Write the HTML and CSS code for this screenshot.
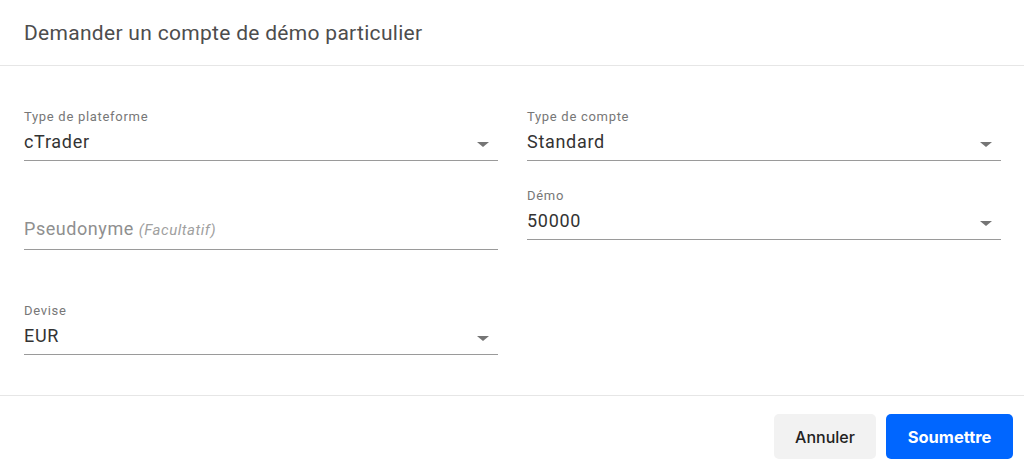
FILE: index.html
```html
<!DOCTYPE html>
<html lang="fr">
<head>
<meta charset="utf-8">
<title>Demander un compte de démo particulier</title>
<link rel="stylesheet" href="styles.css">
</head>
<body>
<div class="dialog">
  <header class="dialog-header">
    <h1 class="dialog-title">Demander un compte de démo particulier</h1>
  </header>
  <main class="dialog-body">
    <div class="column">
      <div class="field">
        <div class="field-label">Type de plateforme</div>
        <div class="select"><span class="value">cTrader</span><span class="arrow"></span></div>
      </div>
      <div class="field field-text gap-pseudo">
        <div class="field-label"></div>
        <div class="input"><span class="placeholder">Pseudonyme <em class="optional">(Facultatif)</em></span></div>
      </div>
      <div class="field gap-devise">
        <div class="field-label">Devise</div>
        <div class="select"><span class="value">EUR</span><span class="arrow"></span></div>
      </div>
    </div>
    <div class="column">
      <div class="field">
        <div class="field-label">Type de compte</div>
        <div class="select"><span class="value">Standard</span><span class="arrow"></span></div>
      </div>
      <div class="field gap-demo">
        <div class="field-label">Démo</div>
        <div class="select"><span class="value">50000</span><span class="arrow"></span></div>
      </div>
    </div>
  </main>
  <footer class="dialog-footer">
    <button class="btn btn-secondary" type="button">Annuler</button>
    <button class="btn btn-primary" type="button">Soumettre</button>
  </footer>
</div>
</body>
</html>
```
FILE: styles.css
```css
* { box-sizing: border-box; }
html, body { margin: 0; padding: 0; background: #ffffff; }
body { font-family: Roboto, "Liberation Sans", Arial, sans-serif; color: #333333; }

.dialog { width: 1024px; height: 469px; display: flex; flex-direction: column; }

.dialog-header {
  height: 66px;
  border-bottom: 1px solid #e6e6e6;
  padding: 0 24px;
  display: flex;
  align-items: flex-start;
}
.dialog-title {
  margin: 0;
  padding-top: 20px;
  font-size: 21px;
  line-height: 26px;
  letter-spacing: 0.3px;
  font-weight: 400;
  color: #4d4d4d;
}

.dialog-body {
  height: 330px;
  padding: 43px 23px 0 24px;
  display: grid;
  grid-template-columns: 474px 474px;
  column-gap: 29px;
  align-items: start;
  border-bottom: 1px solid #e6e6e6;
}
.column { display: flex; flex-direction: column; }

.field { display: flex; flex-direction: column; }
.gap-pseudo { margin-top: 34px; }
.gap-devise { margin-top: 53px; }
.gap-demo { margin-top: 27px; }

.field-label {
  height: 16px;
  font-size: 13px;
  line-height: 16px;
  letter-spacing: 0.7px;
  color: #777777;
}

.select, .input {
  position: relative;
  display: flex;
  align-items: center;
  border-bottom: 1px solid #9a9a9a;
  padding: 5px 0 6px;
  height: 36px;
}
.input { padding: 6px 0 8px; height: 39px; }

.value {
  font-size: 18px;
  line-height: 24px;
  letter-spacing: 0.7px;
  color: #333333;
}
.placeholder {
  font-size: 18px;
  line-height: 24px;
  letter-spacing: 0.55px;
  color: #8f8f8f;
}
.optional {
  font-size: 15px;
  letter-spacing: 0.5px;
  color: #a0a0a0;
}
.arrow {
  position: absolute;
  right: 9px;
  top: 17px;
  width: 0;
  height: 0;
  border-left: 6px solid transparent;
  border-right: 6px solid transparent;
  border-top: 5px solid #757575;
}

.dialog-footer {
  flex: 1;
  display: flex;
  justify-content: flex-end;
  align-items: flex-start;
  gap: 10px;
  padding: 18px 11px 0 0;
}
.btn {
  height: 45px;
  padding: 0 18px;
  border: none;
  border-radius: 5px;
  font-family: Inter, "Liberation Sans", Arial, sans-serif;
  font-size: 16px;
  cursor: pointer;
}
.btn-secondary {
  width: 102px;
  background: #f2f2f2;
  color: #222222;
  font-weight: 500;
}
.btn-primary {
  width: 127px;
  background: #0066ff;
  color: #ffffff;
  font-weight: 700;
  font-size: 16.5px;
}
```
